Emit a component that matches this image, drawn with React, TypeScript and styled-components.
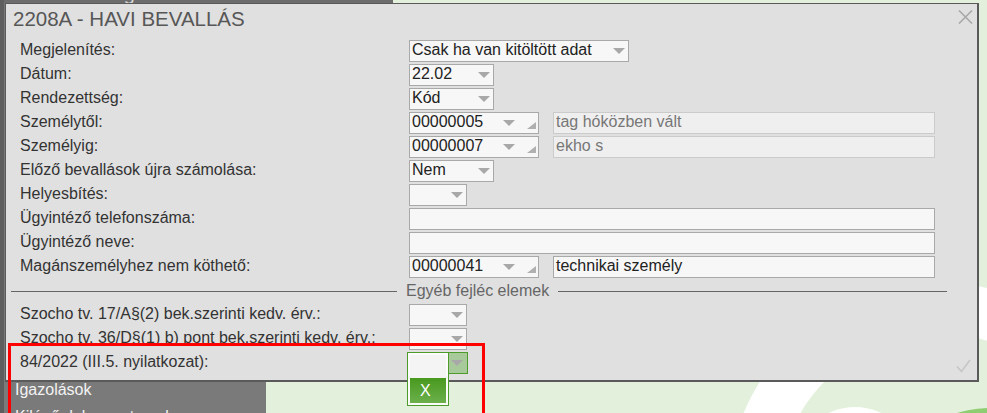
import React from 'react';
import styled, { createGlobalStyle } from 'styled-components';

const GlobalStyle = createGlobalStyle`
  html, body {
    margin: 0;
    padding: 0;
  }
  body {
    font-family: 'Liberation Sans', Arial, sans-serif;
  }
`;

const Page = styled.div`
  position: relative;
  width: 987px;
  height: 413px;
  overflow: hidden;
  background: #e3f0dc;
  display: flex;
`;

const Sidebar = styled.div`
  width: 262px;
  flex: none;
  background: #7a7a7a;
  border-left: 4px solid #5e5e5e;
  display: flex;
  flex-direction: column;
`;

const SidebarHeader = styled.div`
  position: relative;
  z-index: 1;
  width: 389px;
  height: 20px;
  margin-top: -17px;
  background: #6c6c6c;
  color: #d6d6d6;
  font-size: 20px;
  line-height: 20px;
  white-space: nowrap;
`;

const Menu = styled.div`
  margin-top: 373px;
  display: flex;
  flex-direction: column;
`;

const MenuItem = styled.div`
  height: 27px;
  line-height: 27px;
  padding-left: 11px;
  font-size: 16px;
  color: #f2f2f2;
  white-space: nowrap;
`;

const Main = styled.div`
  position: relative;
  flex: 1;
`;

const Decoration = styled.svg`
  position: absolute;
  inset: 0;
  width: 100%;
  height: 100%;
`;

const Dialog = styled.div`
  position: absolute;
  z-index: 2;
  left: 5px;
  top: 3px;
  width: 974px;
  height: 379px;
  box-sizing: border-box;
  background: #e0e0e0;
  border-style: solid;
  border-color: #5a5a5a;
  border-width: 1px 2px 2px 1px;
`;

const TitleBar = styled.div`
  height: 36px;
  box-sizing: border-box;
  display: flex;
  justify-content: space-between;
  align-items: flex-start;
  padding: 3px 4px 0 7px;
`;

const Title = styled.div`
  font-size: 20.5px;
  line-height: 24px;
  color: #575757;
  white-space: nowrap;
`;

const CloseIcon = styled.svg`
  margin-top: 3px;
`;

const Form = styled.div`
  display: grid;
  grid-template-columns: 389px 1fr;
  grid-auto-rows: 22px;
  row-gap: 2px;
  padding: 0 42px 0 14px;
`;

const Label = styled.div`
  font-size: 16px;
  line-height: 20px;
  color: #333;
  white-space: nowrap;
`;

const Fields = styled.div`
  display: flex;
  gap: 14px;
  align-items: flex-start;
`;

const SelectBox = styled.div<{ $w: number }>`
  width: ${(p) => p.$w}px;
  height: 22px;
  flex: none;
  box-sizing: border-box;
  border: 1px solid #a9a9a9;
  background: #f7f7f7;
  display: flex;
  align-items: center;
  padding: 0 3px 0 2px;
  font-size: 16px;
  color: #222;
`;

const Value = styled.span`
  flex: 1;
  align-self: flex-start;
  line-height: 18px;
  white-space: nowrap;
  overflow: hidden;
`;

const Arrow = styled.span`
  width: 0;
  height: 0;
  flex: none;
  border-left: 6px solid transparent;
  border-right: 6px solid transparent;
  border-top: 6px solid #a8a8a8;
`;

const Grip = styled.svg`
  flex: none;
  align-self: flex-end;
  margin: 0 -1px 4px 12px;
`;

const TextBox = styled.div<{ $readOnly?: boolean }>`
  flex: 1;
  height: 22px;
  box-sizing: border-box;
  border: 1px solid ${(p) => (p.$readOnly ? '#cbcbcb' : '#a9a9a9')};
  background: ${(p) => (p.$readOnly ? '#efefef' : '#f7f7f7')};
  color: ${(p) => (p.$readOnly ? '#777' : '#222')};
  padding-left: 2px;
  font-size: 16px;
  line-height: 18px;
  white-space: nowrap;
`;

const LegendRow = styled.div`
  grid-column: 1 / -1;
  margin: 0 -12px 0 -9px;
  display: flex;
  align-items: center;
  gap: 9px;
`;

const LegendLine = styled.div<{ $w?: number }>`
  height: 1px;
  background: #666;
  ${(p) => (p.$w ? `width: ${p.$w}px; flex: none;` : 'flex: 1;')}
`;

const LegendText = styled.div`
  font-size: 16px;
  line-height: 22px;
  color: #666;
  white-space: nowrap;
`;

const OpenSelect = styled.div`
  position: relative;
  width: 61px;
  height: 22px;
  margin-left: -2px;
  box-sizing: border-box;
  border: 1px solid #4c9b2b;
  background: linear-gradient(to right, #f7f7f7 40px, #a8c99a 40px);
  display: flex;
  align-items: center;
  justify-content: flex-end;
  padding-right: 4px;
`;

const DropList = styled.div`
  position: absolute;
  left: -1px;
  top: -1px;
  width: 42px;
  height: 54px;
  box-sizing: border-box;
  border: 1px solid #4c9b2b;
  background: #fbfbfb;
  padding: 2px;
  display: flex;
  flex-direction: column;
`;

const Option = styled.div<{ $selected?: boolean }>`
  height: ${(p) => (p.$selected ? 25 : 23)}px;
  line-height: 25px;
  padding-left: 10px;
  font-size: 16px;
  color: #fff;
  background: ${(p) =>
    p.$selected ? 'linear-gradient(#48991e, #6cb04c)' : '#f4f4f4'};
`;

const CheckIcon = styled.svg`
  position: absolute;
  right: 6px;
  bottom: 7px;
`;

const Annotation = styled.div`
  position: absolute;
  z-index: 3;
  left: 8px;
  top: 343px;
  width: 477px;
  height: 120px;
  box-sizing: border-box;
  border: 3px solid #ff0000;
`;

const Select = ({ w, value }: { w: number; value?: string }) => (
  <SelectBox $w={w}>
    <Value>{value}</Value>
    <Arrow />
  </SelectBox>
);

const Combo = ({ value }: { value: string }) => (
  <SelectBox $w={130}>
    <Value>{value}</Value>
    <Arrow />
    <Grip width="9" height="7" viewBox="0 0 9 7">
      <polygon points="9,0 9,7 0,7" fill="#b0b0b0" />
    </Grip>
  </SelectBox>
);

const App = () => (
  <>
    <GlobalStyle />
    <Page>
      <Sidebar>
        <SidebarHeader>NAV adatszolgáltatások</SidebarHeader>
        <Menu>
          <MenuItem>Igazolások</MenuItem>
          <MenuItem>Kilépő dokumentumok</MenuItem>
        </Menu>
      </Sidebar>
      <Main>
        <Decoration viewBox="266 0 721 413" preserveAspectRatio="none">
          <circle cx="939" cy="494" r="186" fill="none" stroke="#ffffff" strokeWidth="51" />
          <circle cx="855" cy="467" r="60" fill="#ffffff" />
          <circle cx="990" cy="520" r="112" fill="#8fcd73" />
        </Decoration>
      </Main>

      <Dialog>
        <TitleBar>
          <Title>2208A - HAVI BEVALLÁS</Title>
          <CloseIcon width="15" height="14" viewBox="0 0 15 14">
            <path d="M1 0.5 L14 13.5 M14 0.5 L1 13.5" stroke="#a8a8a8" strokeWidth="1.6" />
          </CloseIcon>
        </TitleBar>
        <Form>
          <Label>Megjelenítés:</Label>
          <Fields>
            <Select w={220} value="Csak ha van kitöltött adat" />
          </Fields>

          <Label>Dátum:</Label>
          <Fields>
            <Select w={85} value="22.02" />
          </Fields>

          <Label>Rendezettség:</Label>
          <Fields>
            <Select w={85} value="Kód" />
          </Fields>

          <Label>Személytől:</Label>
          <Fields>
            <Combo value="00000005" />
            <TextBox $readOnly>tag hóközben vált</TextBox>
          </Fields>

          <Label>Személyig:</Label>
          <Fields>
            <Combo value="00000007" />
            <TextBox $readOnly>ekho s</TextBox>
          </Fields>

          <Label>Előző bevallások újra számolása:</Label>
          <Fields>
            <Select w={85} value="Nem" />
          </Fields>

          <Label>Helyesbítés:</Label>
          <Fields>
            <Select w={58} />
          </Fields>

          <Label>Ügyintéző telefonszáma:</Label>
          <Fields>
            <TextBox />
          </Fields>

          <Label>Ügyintéző neve:</Label>
          <Fields>
            <TextBox />
          </Fields>

          <Label>Magánszemélyhez nem köthető:</Label>
          <Fields>
            <Combo value="00000041" />
            <TextBox>technikai személy</TextBox>
          </Fields>

          <LegendRow>
            <LegendLine $w={386} />
            <LegendText>Egyéb fejléc elemek</LegendText>
            <LegendLine />
          </LegendRow>

          <Label>Szocho tv. 17/A§(2) bek.szerinti kedv. érv.:</Label>
          <Fields>
            <Select w={58} />
          </Fields>

          <Label>Szocho tv. 36/D§(1) b) pont bek.szerinti kedv. érv.:</Label>
          <Fields>
            <Select w={58} />
          </Fields>

          <Label>84/2022 (III.5. nyilatkozat):</Label>
          <Fields>
            <OpenSelect>
              <Arrow />
              <DropList>
                <Option />
                <Option $selected>X</Option>
              </DropList>
            </OpenSelect>
          </Fields>
        </Form>
        <CheckIcon width="15" height="14" viewBox="0 0 15 14">
          <polyline points="1,7.5 5.5,12.5 14,1" fill="none" stroke="#c6c6c6" strokeWidth="1.6" />
        </CheckIcon>
      </Dialog>

      <Annotation />
    </Page>
  </>
);

export default App;
